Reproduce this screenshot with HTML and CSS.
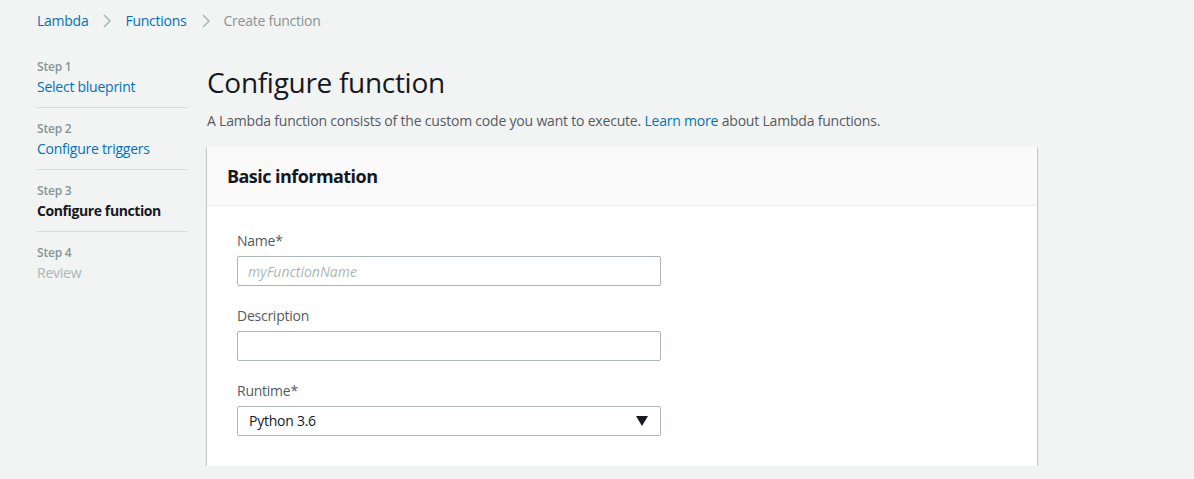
FILE: index.html
```html
<!DOCTYPE html>
<html lang="en">
<head>
<meta charset="utf-8">
<title>Create function</title>
<link rel="stylesheet" href="styles.css">
</head>
<body>
<nav class="breadcrumbs">
  <a class="crumb-link" href="#">Lambda</a>
  <svg class="crumb-sep" width="10" height="16" viewBox="0 0 10 16"><path d="M2 2 L8 8 L2 14" fill="none" stroke="#aab7b8" stroke-width="1.5"/></svg>
  <a class="crumb-link" href="#">Functions</a>
  <svg class="crumb-sep" width="10" height="16" viewBox="0 0 10 16"><path d="M2 2 L8 8 L2 14" fill="none" stroke="#aab7b8" stroke-width="1.5"/></svg>
  <span class="crumb-current">Create function</span>
</nav>
<div class="layout">
  <aside class="steps">
    <div class="step">
      <div class="step-num">Step 1</div>
      <a class="step-name link" href="#">Select blueprint</a>
    </div>
    <div class="step">
      <div class="step-num">Step 2</div>
      <a class="step-name link" href="#">Configure triggers</a>
    </div>
    <div class="step">
      <div class="step-num">Step 3</div>
      <div class="step-name current">Configure function</div>
    </div>
    <div class="step last">
      <div class="step-num">Step 4</div>
      <div class="step-name disabled">Review</div>
    </div>
  </aside>
  <main class="main">
    <h1 class="title">Configure function</h1>
    <p class="intro">A Lambda function consists of the custom code you want to execute. <a class="link" href="#">Learn more</a> about Lambda functions.</p>
    <section class="card">
      <header class="card-header"><h2>Basic information</h2></header>
      <div class="card-body">
        <label class="field">
          <span class="field-label">Name*</span>
          <input class="input" type="text" placeholder="myFunctionName">
        </label>
        <label class="field">
          <span class="field-label">Description</span>
          <input class="input" type="text">
        </label>
        <label class="field">
          <span class="field-label">Runtime*</span>
          <span class="select">
            <span class="select-value">Python 3.6</span>
            <svg class="select-arrow" width="12" height="10" viewBox="0 0 12 10"><path d="M0 0 H12 L6 10 Z" fill="#16191f"/></svg>
          </span>
        </label>
      </div>
    </section>
  </main>
</div>
</body>
</html>
```

FILE: styles.css
```css
* { box-sizing: border-box; }
html, body { margin: 0; padding: 0; }
body {
  background: #f2f3f3;
  font-family: "Open Sans", "Noto Sans", sans-serif;
  font-size: 14px;
  letter-spacing: -0.25px;
  color: #16191f;
}
a { text-decoration: none; }
.link { color: #0073bb; }

.breadcrumbs {
  display: flex;
  align-items: center;
  height: 41px;
  padding-left: 37px;
  padding-top: 1px;
  line-height: 20px;
}
.crumb-link { color: #0073bb; }
.crumb-sep { margin: 0 13px 0 14px; }
.crumb-current { color: #879596; }

.layout {
  display: flex;
  gap: 20px;
  padding: 5px 0 0 37px;
}
.steps { width: 150px; flex: none; }
.step {
  padding: 13px 0 10px;
  border-bottom: 1px solid #d5dbdb;
}
.step.last { border-bottom: none; }
.step-num {
  font-size: 12px;
  line-height: 16px;
  color: #879596;
  font-weight: 600;
  letter-spacing: -0.2px;
}
.step-name {
  display: block;
  margin-top: 2px;
  line-height: 20px;
  font-size: 14px;
}
.step-name.current { font-weight: 700; color: #16191f; letter-spacing: -0.4px; }
.step-name.disabled { color: #aab7b8; }

.main { width: 830px; flex: none; }
.title {
  margin: 18px 0 0;
  font-size: 28px;
  line-height: 36px;
  font-weight: 400;
  letter-spacing: -0.3px;
  color: #16191f;
}
.intro {
  margin: 11px 0 16px;
  line-height: 20px;
  letter-spacing: -0.2px;
  color: #545b64;
}
.card {
  background: #fff;
  box-shadow: 0 1px 1px 0 rgba(0,28,36,.3), 1px 1px 1px 0 rgba(0,28,36,.15), -1px 1px 1px 0 rgba(0,28,36,.15);
}
.card-header {
  display: flex;
  align-items: center;
  height: 59px;
  padding: 0 20px;
  background: #fafafa;
  border-bottom: 1px solid #eaeded;
}
.card-header h2 {
  margin: 0;
  font-size: 18px;
  font-weight: 700;
  line-height: 24px;
  letter-spacing: -0.55px;
  color: #16191f;
}
.card-body {
  display: flex;
  flex-direction: column;
  gap: 20px;
  padding: 25px 30px 30px;
}
.field { display: flex; flex-direction: column; gap: 5px; }
.field-label { line-height: 20px; color: #545b64; }
.input, .select {
  width: 424px;
  height: 30px;
  border: 1px solid #aab7b8;
  border-radius: 2px;
  background: #fff;
  font-family: inherit;
  font-size: 14px;
  padding: 0 10px;
  color: #16191f;
}
.input::placeholder { color: #aab7b8; font-style: italic; letter-spacing: 0; }
.select {
  display: flex;
  align-items: center;
  justify-content: space-between;
  padding: 0 12px 0 11px;
}
.select-value { line-height: 20px; }
```
